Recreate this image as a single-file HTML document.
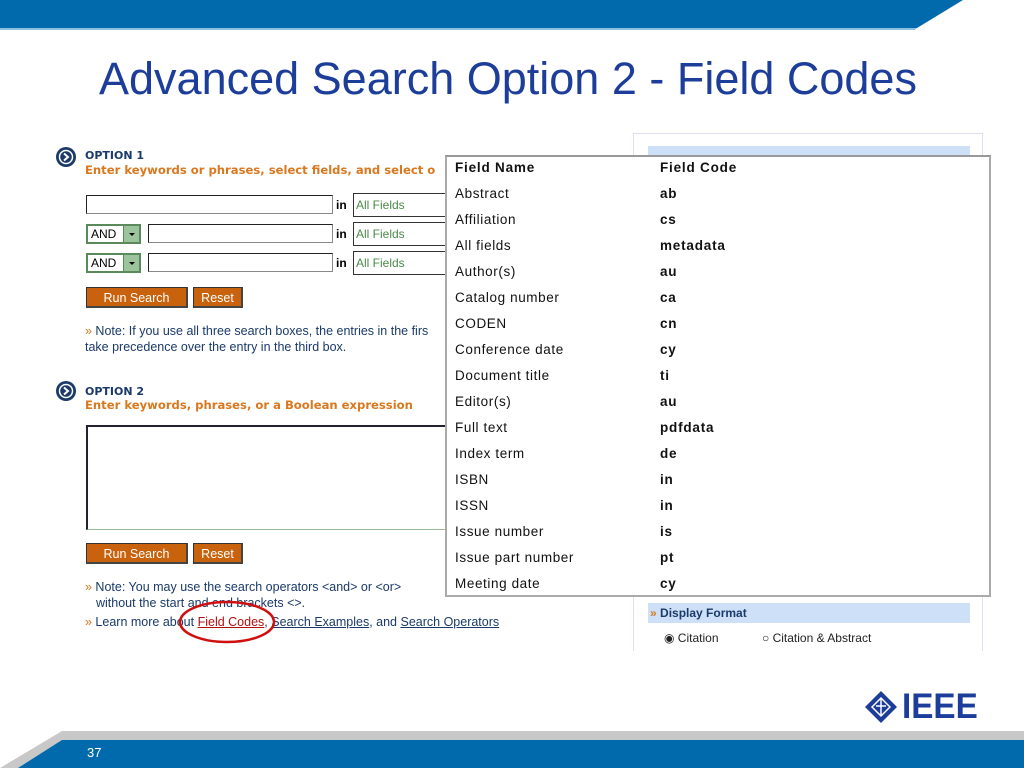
<!DOCTYPE html>
<html><head><meta charset="utf-8"><style>
*{margin:0;padding:0;box-sizing:border-box}
body{width:1024px;height:768px;position:relative;overflow:hidden;background:#fff;font-family:"Liberation Sans",sans-serif}
.a{position:absolute}
.v{font-family:"DejaVu Sans",sans-serif}
.inp{position:absolute;border:1px solid #222;border-right-color:#888;border-bottom-color:#888;background:#fff}
.sel{position:absolute;border:1px solid #333;background:#fff;font-size:12px;color:#4a8a4a;padding:4px 0 0 2px}
.and{position:absolute;width:55px;height:20px;border:2px solid #5a8a5a;background:#fff;font-size:12px;padding:1px 0 0 3px}
.and i{position:absolute;right:0;top:0;width:16px;height:16px;background:#9cc49c;border-left:1px solid #5a8a5a}
.and i:after{content:"";position:absolute;left:5px;top:7px;border:3px solid transparent;border-top:3px solid #000}
.btn{position:absolute;height:21px;background:#c8620c;color:#fff;font-size:12.5px;text-align:center;padding-top:3px;border:1px solid #333;border-right:2px solid #444;border-bottom:2px solid #444}
.t{font-size:12.5px;color:#1a3a6a}
.rows div{height:26px;font-size:13.5px;letter-spacing:.6px;color:#111}
.rows b{letter-spacing:.8px}
</style></head><body>
<svg class="a" style="left:0;top:0" width="1024" height="32"><polygon points="0,0 963,0 917,28 0,28" fill="#006aad"/><polygon points="0,28 917,28 915,30 0,30" fill="#8fbfe0"/></svg>
<div class="a" style="left:99px;top:53px;font-size:45px;color:#1c3d9a;white-space:nowrap">Advanced Search Option 2 - Field Codes</div>

<!-- option 1 -->
<svg class="a" style="left:55px;top:146px" width="22" height="22"><circle cx="11" cy="11" r="10" fill="#1b3a6a"/><circle cx="11" cy="11" r="6.5" fill="none" stroke="#fff" stroke-width="1.5"/><path d="M9 7.5l4 3.5-4 3.5" fill="none" stroke="#fff" stroke-width="2"/></svg>
<div class="a v" style="left:85px;top:149px;font-size:11px;font-weight:bold;color:#1b3a6a">OPTION 1</div>
<div class="a v" style="left:85px;top:163px;font-size:11.6px;font-weight:bold;color:#d9781e;white-space:nowrap">Enter keywords or phrases, select fields, and select o</div>
<div class="inp" style="left:86px;top:195px;width:247px;height:19px"></div>
<div class="a" style="left:336px;top:198px;font-size:12px;font-weight:bold">in</div>
<div class="sel" style="left:353px;top:193px;width:95px;height:24px">All Fields</div>
<div class="and" style="left:86px;top:224px">AND<i></i></div>
<div class="inp" style="left:148px;top:224px;width:185px;height:19px"></div>
<div class="a" style="left:336px;top:227px;font-size:12px;font-weight:bold">in</div>
<div class="sel" style="left:353px;top:222px;width:95px;height:24px">All Fields</div>
<div class="and" style="left:86px;top:253px">AND<i></i></div>
<div class="inp" style="left:148px;top:253px;width:185px;height:19px"></div>
<div class="a" style="left:336px;top:256px;font-size:12px;font-weight:bold">in</div>
<div class="sel" style="left:353px;top:251px;width:95px;height:24px">All Fields</div>
<div class="btn" style="left:86px;top:287px;width:102px">Run Search</div>
<div class="btn" style="left:193px;top:287px;width:50px">Reset</div>
<div class="a t" style="left:85px;top:324px;white-space:nowrap"><span style="color:#d9781e">»</span> Note: If you use all three search boxes, the entries in the firs</div>
<div class="a t" style="left:85px;top:340px">take precedence over the entry in the third box.</div>

<!-- option 2 -->
<svg class="a" style="left:55px;top:380px" width="22" height="22"><circle cx="11" cy="11" r="10" fill="#1b3a6a"/><circle cx="11" cy="11" r="6.5" fill="none" stroke="#fff" stroke-width="1.5"/><path d="M9 7.5l4 3.5-4 3.5" fill="none" stroke="#fff" stroke-width="2"/></svg>
<div class="a v" style="left:85px;top:385px;font-size:11px;font-weight:bold;color:#1b3a6a">OPTION 2</div>
<div class="a v" style="left:85px;top:398px;font-size:11.6px;font-weight:bold;color:#d9781e">Enter keywords, phrases, or a Boolean expression</div>
<div class="a" style="left:86px;top:425px;width:370px;height:105px;border:2px solid #223;border-right:none;border-bottom:1px solid #9b9"></div>
<div class="btn" style="left:86px;top:543px;width:102px">Run Search</div>
<div class="btn" style="left:193px;top:543px;width:50px">Reset</div>
<div class="a t" style="left:85px;top:580px"><span style="color:#d9781e">»</span> Note: You may use the search operators &lt;and&gt; or &lt;or&gt;</div>
<div class="a t" style="left:96px;top:596px">without the start and end brackets &lt;&gt;.</div>
<div class="a t" style="left:85px;top:615px;white-space:nowrap"><span style="color:#d9781e">»</span> Learn more about <u style="color:#b01010">Field Codes</u>, <u>Search Examples</u>, and <u>Search Operators</u></div>
<svg class="a" style="left:175px;top:600px" width="110" height="48"><ellipse cx="52" cy="22" rx="47" ry="20" fill="none" stroke="#d01010" stroke-width="2.5"/></svg>

<!-- right panel -->
<div class="a" style="left:633px;top:133px;width:350px;height:518px;border:1px solid #dde;border-bottom:none"></div>
<div class="a" style="left:648px;top:146px;width:322px;height:12px;background:#cde0f8"></div>
<div class="a" style="left:648px;top:603px;width:322px;height:20px;background:#cde0f8;font-size:12px;font-weight:bold;color:#1b3a6a;padding:3px 0 0 2px"><span style="color:#d9781e">»</span> Display Format</div>
<div class="a" style="left:664px;top:631px;font-size:12px;color:#222">◉ Citation</div>
<div class="a" style="left:762px;top:631px;font-size:12px;color:#222">○ Citation &amp; Abstract</div>

<!-- popup -->
<div class="a" style="left:445px;top:155px;width:546px;height:442px;background:#fff;border:2px solid #aaa;border-top-color:#999"></div>
<div class="a rows" style="left:455px;top:160px;width:200px">
<div><b>Field Name</b></div><div>Abstract</div><div>Affiliation</div><div>All fields</div><div>Author(s)</div><div>Catalog number</div><div>CODEN</div><div>Conference date</div><div>Document title</div><div>Editor(s)</div><div>Full text</div><div>Index term</div><div>ISBN</div><div>ISSN</div><div>Issue number</div><div>Issue part number</div><div>Meeting date</div></div>
<div class="a rows" style="left:660px;top:160px;width:200px;font-weight:bold">
<div><b>Field Code</b></div><div><b>ab</b></div><div><b>cs</b></div><div><b>metadata</b></div><div><b>au</b></div><div><b>ca</b></div><div><b>cn</b></div><div><b>cy</b></div><div><b>ti</b></div><div><b>au</b></div><div><b>pdfdata</b></div><div><b>de</b></div><div><b>in</b></div><div><b>in</b></div><div><b>is</b></div><div><b>pt</b></div><div><b>cy</b></div></div>

<!-- IEEE logo -->
<svg class="a" style="left:863px;top:690px" width="38" height="36"><polygon points="18,1 34,17 18,33 2,17" fill="#1c3d9a"/><polygon points="18,8 27,17 18,26 9,17" fill="none" stroke="#fff" stroke-width="1.5"/><path d="M18 9v16M13 16h10" stroke="#fff" stroke-width="1.5"/></svg>
<div class="a" style="left:902px;top:688px;font-size:35px;line-height:38px;font-weight:bold;color:#1c3d9a;letter-spacing:0px;transform:scaleX(0.95);transform-origin:left">IEEE</div>

<svg class="a" style="left:0;top:728px" width="1024" height="40"><polygon points="62,3 1024,3 1024,40 0,40" fill="#c8c8c8"/><polygon points="62,12 1024,12 1024,40 18,40" fill="#006aad"/></svg>
<div class="a" style="left:87px;top:745px;font-size:13px;color:#fff">37</div>
</body></html>
